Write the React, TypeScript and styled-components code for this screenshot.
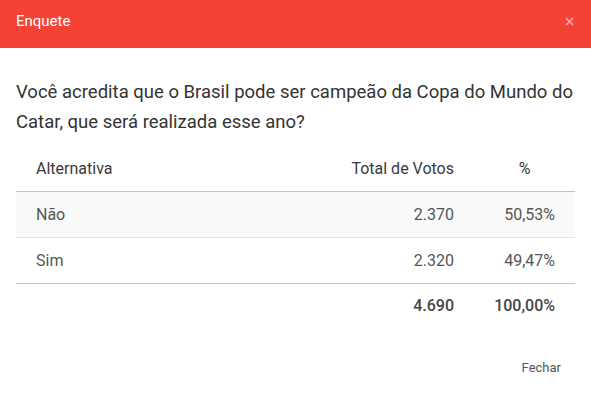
import React from 'react';
import styled, { createGlobalStyle } from 'styled-components';

const GlobalStyle = createGlobalStyle`
  html, body {
    margin: 0;
    padding: 0;
    background: #ffffff;
    font-family: Roboto, "Liberation Sans", Arial, sans-serif;
  }
`;

const Dialog = styled.div`
  width: 591px;
  height: 402px;
  display: flex;
  flex-direction: column;
  background: #ffffff;
`;

const Header = styled.div`
  height: 48px;
  background-color: #f44336;
  display: flex;
  align-items: center;
  justify-content: space-between;
  padding: 0 16px;
  box-sizing: border-box;
  color: #ffffff;
`;

const Title = styled.h2`
  margin: 0;
  font-size: 15px;
  font-weight: 400;
  margin-top: -7px;
`;

const CloseButton = styled.button`
  background: none;
  border: none;
  padding: 0;
  margin-top: -6px;
  margin-right: 1px;
  width: 10px;
  height: 10px;
  display: flex;
  align-items: center;
  justify-content: center;
  cursor: pointer;
  opacity: 0.6;
`;

const Body = styled.div`
  padding: 29px 16px 0;
  flex: 1;
`;

const Question = styled.p`
  margin: 0 0 8px;
  font-size: 18.5px;
  line-height: 30px;
  color: #333333;
`;

const Table = styled.table`
  width: 100%;
  border-collapse: collapse;
  font-size: 16px;
  color: #444444;
`;

const Row = styled.tr<{ $shaded?: boolean }>`
  background: ${(p) => (p.$shaded ? '#fafafa' : 'transparent')};
`;

const HeadCell = styled.th<{ $align?: string }>`
  height: 46px;
  padding: 0 20px;
  font-weight: 400;
  text-align: ${(p) => p.$align || 'left'};
  border-bottom: 1px solid #c4c4c4;
  color: #3a3a3a;
`;

const Cell = styled.td<{ $align?: string; $last?: boolean }>`
  height: 45px;
  padding: 0 20px;
  text-align: ${(p) => p.$align || 'left'};
  border-bottom: 1px solid ${(p) => (p.$last ? '#c4c4c4' : '#e2e2e2')};
  color: #555555;
`;

const TotalCell = styled.td<{ $align?: string }>`
  height: 43px;
  padding: 0 20px;
  text-align: ${(p) => p.$align || 'left'};
  font-weight: 500;
  color: #444444;
`;

const Footer = styled.div`
  display: flex;
  justify-content: flex-end;
  padding: 0 30px 27px 0;
`;

const TextButton = styled.button`
  background: none;
  border: none;
  font-family: inherit;
  font-size: 13px;
  color: #555555;
  padding: 0;
  cursor: pointer;
`;

const results = [
  { id: 1, label: 'Não', votes: '2.370', pct: '50,53%' },
  { id: 2, label: 'Sim', votes: '2.320', pct: '49,47%' },
];

const App: React.FC = () => {
  return (
    <>
      <GlobalStyle />
      <Dialog>
        <Header>
          <Title>Enquete</Title>
          <CloseButton aria-label="Fechar">
            <svg width="9" height="9" viewBox="0 0 9 9">
              <path d="M1 1L8 8M8 1L1 8" stroke="#ffffff" strokeWidth="1.4" />
            </svg>
          </CloseButton>
        </Header>
        <Body>
          <Question>
            Você acredita que o Brasil pode ser campeão da Copa do Mundo do Catar, que será realizada esse ano?
          </Question>
          <Table>
            <colgroup>
              <col />
              <col style={{ width: 160 }} />
              <col style={{ width: 101 }} />
            </colgroup>
            <thead>
              <tr>
                <HeadCell>Alternativa</HeadCell>
                <HeadCell $align="right">Total de Votos</HeadCell>
                <HeadCell $align="center">%</HeadCell>
              </tr>
            </thead>
            <tbody>
              {results.map((r, i) => (
                <Row key={r.id} $shaded={i === 0}>
                  <Cell $last={i === results.length - 1}>{r.label}</Cell>
                  <Cell $align="right" $last={i === results.length - 1}>{r.votes}</Cell>
                  <Cell $align="right" $last={i === results.length - 1}>{r.pct}</Cell>
                </Row>
              ))}
              <tr>
                <TotalCell />
                <TotalCell $align="right">4.690</TotalCell>
                <TotalCell $align="right">100,00%</TotalCell>
              </tr>
            </tbody>
          </Table>
        </Body>
        <Footer>
          <TextButton>Fechar</TextButton>
        </Footer>
      </Dialog>
    </>
  );
};

export default App;
